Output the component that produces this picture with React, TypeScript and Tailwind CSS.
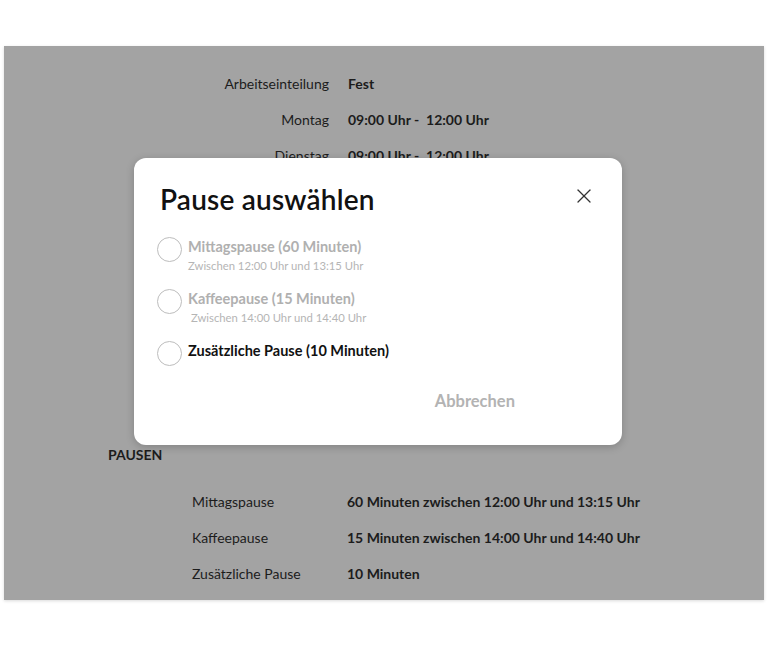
import { X } from 'lucide-react';

const workRows = [
  { label: 'Arbeitseinteilung', value: 'Fest' },
  { label: 'Montag', value: '09:00 Uhr -  12:00 Uhr' },
  { label: 'Dienstag', value: '09:00 Uhr -  12:00 Uhr' },
  { label: 'Mittwoch', value: '09:00 Uhr -  12:00 Uhr' },
  { label: 'Donnerstag', value: '09:00 Uhr -  12:00 Uhr' },
  { label: 'Freitag', value: '09:00 Uhr -  12:00 Uhr' },
  { label: 'Samstag', value: '-' },
  { label: 'Sonntag', value: '-' },
  { label: 'Wochenstunden', value: '15 Stunden' },
  { label: 'Urlaubstage', value: '25 Tage' },
];

const pauseRows = [
  { label: 'Mittagspause', value: '60 Minuten', extra: ' zwischen 12:00 Uhr und 13:15 Uhr' },
  { label: 'Kaffeepause', value: '15 Minuten', extra: ' zwischen 14:00 Uhr und 14:40 Uhr' },
  { label: 'Zusätzliche Pause', value: '10 Minuten', extra: '' },
];

const options = [
  { title: 'Mittagspause (60 Minuten)', sub: 'Zwischen 12:00 Uhr und 13:15 Uhr', disabled: true },
  { title: 'Kaffeepause (15 Minuten)', sub: '\u00a0Zwischen 14:00 Uhr und 14:40 Uhr', disabled: true },
  { title: 'Zusätzliche Pause (10 Minuten)', sub: '', disabled: false },
];

export default function App() {
  return (
    <div className="relative w-[768px] h-[645px] bg-white font-['Lato','Noto_Sans',sans-serif] overflow-hidden">
      <div className="pt-[46px] px-[4px]">
        {/* Hintergrund */}
        <div className="w-[760px] h-[554px] bg-[#a3a3a3] shadow-[0_1px_3px_rgba(0,0,0,0.15)] pt-[19px] text-[14px] text-[#1c1c1c] overflow-hidden">
          <div className="flex flex-col">
            {workRows.map(r => (
              <div key={r.label} className="flex items-center h-[36px]">
                <div className="w-[325px] text-right">{r.label}</div>
                <div className="pl-[19px] font-bold whitespace-pre">{r.value}</div>
              </div>
            ))}
          </div>
          <div className="pl-[104px] mt-[20px] font-bold leading-[20px]">PAUSEN</div>
          <div className="mt-[18px] flex flex-col">
            {pauseRows.map(r => (
              <div key={r.label} className="flex items-center h-[36px]">
                <div className="pl-[188px] w-[343px]">{r.label}</div>
                <div className="font-bold">
                  {r.value}
                  {r.extra}
                </div>
              </div>
            ))}
          </div>
        </div>
      </div>

      {/* Dialog */}
      <div className="absolute left-[134px] top-[158px] w-[488px] h-[287px] bg-white rounded-[12px] shadow-[0_2px_8px_rgba(0,0,0,0.2)] px-[22px] pt-[24px]">
        <div className="flex items-start justify-between">
          <h2 className="pl-[4px] text-[28px] leading-[34px] font-semibold text-[#111] tracking-[0.2px]">Pause auswählen</h2>
          <button className="mt-[2px] mr-[4px] text-[#333]">
            <X size={24} strokeWidth={1.3} />
          </button>
        </div>
        <div className="mt-[22px] flex flex-col gap-[17px] pl-[1px]">
          {options.map(o => (
            <div key={o.title} className="flex items-start gap-[6px]">
              <span className="mt-[-1px] w-[25px] h-[25px] rounded-full border-[1.5px] border-[#bdbdbd] bg-white shrink-0" />
              <div className="flex flex-col">
                <span className={`text-[14.5px] leading-[18px] font-bold ${o.disabled ? 'text-[#b0b0b0]' : 'text-[#111]'}`}>{o.title}</span>
                {o.sub && <span className="mt-[3px] text-[11.3px] leading-[14px] text-[#b5b5b5]">{o.sub}</span>}
              </div>
            </div>
          ))}
        </div>
        <div className="mt-[25px] flex justify-end pr-[85px]">
          <button className="text-[16.5px] leading-[20px] font-bold text-[#b3b3b3]">Abbrechen</button>
        </div>
      </div>
    </div>
  );
}
